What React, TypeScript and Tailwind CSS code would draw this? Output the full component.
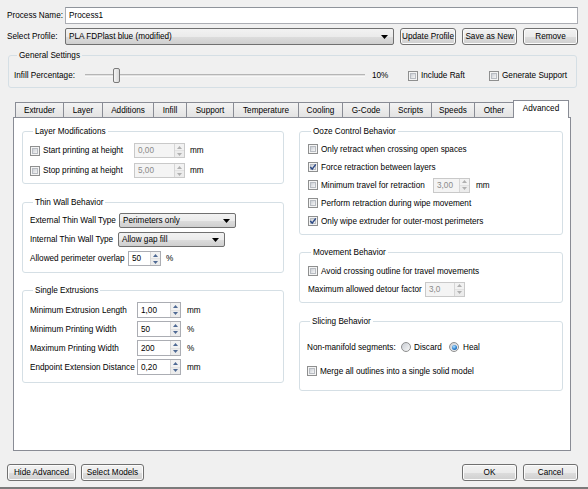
import React from "react";

const tabs: [string, string][] = [
  ["Extruder", "w-[49px]"],
  ["Layer", "w-[40px]"],
  ["Additions", "w-[52px]"],
  ["Infill", "w-[34px]"],
  ["Support", "w-[48px]"],
  ["Temperature", "w-[66px]"],
  ["Cooling", "w-[45px]"],
  ["G-Code", "w-[48px]"],
  ["Scripts", "w-[43px]"],
  ["Speeds", "w-[44px]"],
  ["Other", "w-[40px]"],
];

const btnBg =
  "bg-[linear-gradient(to_bottom,#f2f2f2_0%,#ebebeb_50%,#dddddd_51%,#cfcfcf_100%)]";

function Btn({ children, className = "" }: { children: React.ReactNode; className?: string }) {
  return (
    <div
      className={`flex h-[17px] shrink-0 items-center justify-center rounded-[3px] border border-[#707070] ${btnBg} shadow-[inset_0_0_0_1px_#fcfcfc] ${className}`}
    >
      {children}
    </div>
  );
}

function Check({ checked = false }: { checked?: boolean }) {
  return (
    <span className="flex h-[10px] w-[10px] shrink-0 border border-[#8e8f8f] bg-[#f4f4f4] p-px">
      <span className="flex h-full w-full items-center justify-center border border-[#b8bcc2] bg-[linear-gradient(135deg,#cbcfd5,#f6f6f6)]">
        {checked && (
          <svg width="8" height="8" viewBox="0 0 8 8" className="-m-[2px]">
            <path d="M1.3 4.1 L3.2 6.1 L6.8 1.4" fill="none" stroke="#2d4a86" strokeWidth="1.5" />
          </svg>
        )}
      </span>
    </span>
  );
}

function Radio({ checked = false }: { checked?: boolean }) {
  return (
    <span className="flex h-[10px] w-[10px] shrink-0 items-center justify-center rounded-full border border-[#8e8f8f] bg-[linear-gradient(135deg,#c9cdd3,#f8f8f8)]">
      {checked && (
        <span className="h-[5px] w-[5px] rounded-full bg-[radial-gradient(circle_at_40%_35%,#b5e4ff,#2a7fd0_55%,#164c8c)]" />
      )}
    </span>
  );
}

function Arrow({ up, color }: { up?: boolean; color: string }) {
  return (
    <svg width="5" height="3" viewBox="0 0 5 3">
      <path d={up ? "M0 3 L2.5 0 L5 3 Z" : "M0 0 L2.5 3 L5 0 Z"} fill={color} />
    </svg>
  );
}

function Spin({
  value,
  className = "",
  disabled = false,
}: {
  value: string;
  className?: string;
  disabled?: boolean;
}) {
  return (
    <div
      className={`flex h-[15px] shrink-0 border ${
        disabled ? "border-[#c9c9c9] bg-[#f4f4f4] text-[#8a8a8a]" : "border-[#abadb3] bg-white"
      } ${className}`}
    >
      <span className="flex flex-1 items-center pl-[3px]">{value}</span>
      <span className="flex w-[10px] flex-col border-l border-[#d6d6d6]">
        <span className="flex flex-1 items-center justify-center border-b border-[#e2e2e2] bg-[#f2f2f2]">
          <Arrow up color={disabled ? "#b0b0b0" : "#4f6a94"} />
        </span>
        <span className="flex flex-1 items-center justify-center bg-[#ececec]">
          <Arrow color={disabled ? "#b0b0b0" : "#4f6a94"} />
        </span>
      </span>
    </div>
  );
}

function Combo({ value, className = "" }: { value: string; className?: string }) {
  return (
    <div
      className={`flex shrink-0 items-center justify-between rounded-[2px] border border-[#707070] ${btnBg} pl-[3px] pr-[5px] ${className}`}
    >
      <span>{value}</span>
      <svg width="7" height="4" viewBox="0 0 7 4">
        <path d="M0 0 L7 0 L3.5 4 Z" fill="#000" />
      </svg>
    </div>
  );
}

function Group({
  title,
  className = "",
  children,
  bg = "bg-white",
}: {
  title: string;
  className?: string;
  children: React.ReactNode;
  bg?: string;
}) {
  return (
    <fieldset className={`rounded-[3px] border border-[#d5dfe5] ${className}`}>
      <legend className={`ml-[3px] px-[2px] leading-[11px] ${bg}`}>{title}</legend>
      {children}
    </fieldset>
  );
}

function CheckRow({ label, checked }: { label: string; checked?: boolean }) {
  return (
    <div className="flex h-[18px] items-center gap-[3px]">
      <Check checked={checked} />
      <span>{label}</span>
    </div>
  );
}

export default function App() {
  return (
    <div className="flex h-[489px] w-[588px] flex-col overflow-hidden bg-[#f0f0f0] font-['Liberation_Sans',Arial,sans-serif] text-[8.2px] leading-[11px] text-black">
      <div className="flex flex-col pl-[7px] pr-[10px] pt-[7px]">
        <div className="flex h-[17px] items-center">
          <span className="w-[58px] shrink-0">Process Name:</span>
          <div className="flex h-full flex-1 items-center border border-[#abadb3] border-t-[#8f949b] bg-white px-[3px]">
            Process1
          </div>
        </div>

        <div className="mt-[4px] flex h-[17px] items-center">
          <span className="w-[58px] shrink-0">Select Profile:</span>
          <Combo value="PLA FDPlast blue (modified)" className="h-[17px] w-[329px]" />
          <Btn className="ml-[6px] w-[56px]">Update Profile</Btn>
          <Btn className="ml-[6px] w-[55px]">Save as New</Btn>
          <Btn className="ml-[6px] w-[55px]">Remove</Btn>
        </div>

        <Group title="General Settings" bg="bg-[#f0f0f0]" className="mx-[1px] mt-[5px] pb-[4px] pl-[5px] pt-[7px]">
          <div className="flex h-[15px] items-center">
            <span className="w-[71px] shrink-0">Infill Percentage:</span>
            <div className="relative flex h-[15px] w-[280px] items-center">
              <div className="absolute inset-x-0 top-[6px] h-[3px] border-y border-t-[#b5b5b5] border-b-[#f8f8f8] bg-[#e2e2e2]" />
              <div className="relative ml-[28px] h-[15px] w-[7px] rounded-[2px] border border-[#7a7a7a] bg-[linear-gradient(to_right,#f4f4f4,#dadada)]" />
            </div>
            <span className="ml-[7px] w-[36px] shrink-0">10%</span>
            <Check />
            <span className="ml-[3px] w-[68px] shrink-0">Include Raft</span>
            <Check />
            <span className="ml-[3px]">Generate Support</span>
          </div>
        </Group>

        <div className="ml-[6px] mt-[12px] w-[558px]">
          <div className="flex h-[17px] items-end pl-[2px]">
            {tabs.map(([label, w], i) => (
              <div
                key={label}
                className={`flex h-[15px] shrink-0 items-center justify-center border border-b-0 border-[#898c95] bg-[linear-gradient(to_bottom,#f3f3f3,#e3e3e3)] ${w} ${
                  i > 0 ? "-ml-px" : ""
                }`}
              >
                {label}
              </div>
            ))}
            <div className="relative z-10 -mb-px -ml-px flex h-[18px] w-[56px] shrink-0 items-start justify-center border border-b-0 border-[#898c95] bg-white pt-[2px]">
              Advanced
            </div>
          </div>

          <div className="flex h-[334px] gap-[15px] border border-[#898c95] bg-white px-[8px] pt-[8px]">
            <div className="flex w-[262px] shrink-0 flex-col">
              <Group title="Layer Modifications" className="pb-[5px] pl-[7px] pt-[6px]">
                <div className="flex flex-col gap-[5px]">
                  {[
                    ["Start printing at height", "0,00"],
                    ["Stop printing at height", "5,00"],
                  ].map(([label, v]) => (
                    <div key={label} className="flex h-[15px] items-center">
                      <Check />
                      <span className="ml-[3px] w-[91px] shrink-0">{label}</span>
                      <Spin value={v} disabled className="w-[51px]" />
                      <span className="ml-[5px]">mm</span>
                    </div>
                  ))}
                </div>
              </Group>

              <Group title="Thin Wall Behavior" className="mt-[13px] pb-[6px] pl-[7px] pt-[5px]">
                <div className="flex flex-col gap-[4px]">
                  <div className="flex h-[15px] items-center">
                    <span className="w-[89px] shrink-0">External Thin Wall Type</span>
                    <Combo value="Perimeters only" className="h-[15px] w-[117px]" />
                  </div>
                  <div className="flex h-[15px] items-center">
                    <span className="w-[88px] shrink-0">Internal Thin Wall Type</span>
                    <Combo value="Allow gap fill" className="h-[15px] w-[107px]" />
                  </div>
                  <div className="flex h-[15px] items-center">
                    <span className="w-[98px] shrink-0">Allowed perimeter overlap</span>
                    <Spin value="50" className="w-[33px]" />
                    <span className="ml-[5px]">%</span>
                  </div>
                </div>
              </Group>

              <Group title="Single Extrusions" className="mt-[12px] pb-[7px] pl-[7px] pt-[6px]">
                <div className="flex flex-col gap-[3px]">
                  {[
                    ["Minimum Extrusion Length", "1,00", "mm"],
                    ["Minimum Printing Width", "50", "%"],
                    ["Maximum Printing Width", "200", "%"],
                    ["Endpoint Extension Distance", "0,20", "mm"],
                  ].map(([label, v, u]) => (
                    <div key={label} className="flex h-[16px] items-center">
                      <span className="w-[107px] shrink-0">{label}</span>
                      <Spin value={v} className="h-[16px] w-[44px]" />
                      <span className="ml-[6px]">{u}</span>
                    </div>
                  ))}
                </div>
              </Group>
            </div>

            <div className="flex w-[264px] shrink-0 flex-col">
              <Group title="Ooze Control Behavior" className="pb-[4px] pl-[8px] pt-[3px]">
                <CheckRow label="Only retract when crossing open spaces" />
                <CheckRow label="Force retraction between layers" checked />
                <div className="flex h-[18px] items-center">
                  <Check />
                  <span className="ml-[3px] w-[112px] shrink-0">Minimum travel for retraction</span>
                  <Spin value="3,00" disabled className="w-[37px]" />
                  <span className="ml-[6px]">mm</span>
                </div>
                <CheckRow label="Perform retraction during wipe movement" />
                <CheckRow label="Only wipe extruder for outer-most perimeters" checked />
              </Group>

              <Group title="Movement Behavior" className="mt-[12px] pb-[4px] pl-[8px] pt-[4px]">
                <CheckRow label="Avoid crossing outline for travel movements" />
                <div className="flex h-[18px] items-center">
                  <span className="w-[117px] shrink-0">Maximum allowed detour factor</span>
                  <Spin value="3,0" disabled className="w-[40px]" />
                </div>
              </Group>

              <Group title="Slicing Behavior" className="mt-[13px] pb-[10px] pl-[7px] pt-[11px]">
                <div className="flex flex-col gap-[6px]">
                  <div className="flex h-[18px] items-center">
                    <span className="w-[94px] shrink-0">Non-manifold segments:</span>
                    <Radio />
                    <span className="ml-[3px] w-[35px] shrink-0">Discard</span>
                    <Radio checked />
                    <span className="ml-[4px]">Heal</span>
                  </div>
                  <CheckRow label="Merge all outlines into a single solid model" />
                </div>
              </Group>
            </div>
          </div>
        </div>

        <div className="mt-[13px] flex h-[16px] items-center">
          <Btn className="h-[17px] w-[69px]">Hide Advanced</Btn>
          <Btn className="ml-[5px] h-[17px] w-[63px]">Select Models</Btn>
          <div className="flex-1" />
          <Btn className="h-[17px] w-[55px]">OK</Btn>
          <Btn className="ml-[6px] h-[17px] w-[55px]">Cancel</Btn>
        </div>
      </div>
      <div className="mt-auto h-[2px] bg-[#7b7b7b]" />
    </div>
  );
}
